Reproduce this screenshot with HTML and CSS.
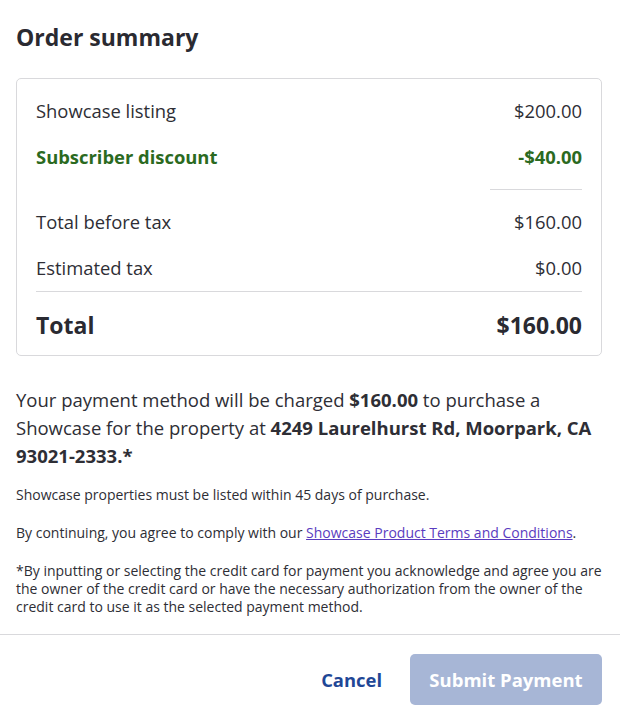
FILE: index.html
```html
<!DOCTYPE html>
<html lang="en">
<head>
<meta charset="utf-8">
<title>Order summary</title>
<link rel="stylesheet" href="styles.css">
</head>
<body>
<div class="content">
  <h1 class="title">Order summary</h1>
  <div class="summary">
    <div class="row"><span>Showcase listing</span><span>$200.00</span></div>
    <div class="row row-gap discount"><span>Subscriber discount</span><span>-$40.00</span></div>
    <div class="divider-short"></div>
    <div class="row"><span>Total before tax</span><span>$160.00</span></div>
    <div class="row row-gap"><span>Estimated tax</span><span>$0.00</span></div>
    <div class="divider-full"></div>
    <div class="row total"><span>Total</span><span>$160.00</span></div>
  </div>
  <p class="lead">Your payment method will be charged <strong>$160.00</strong> to purchase a Showcase for the property at <strong>4249 Laurelhurst Rd, Moorpark, CA 93021-2333.*</strong></p>
  <p class="small first">Showcase properties must be listed within 45 days of purchase.</p>
  <p class="small">By continuing, you agree to comply with our <a href="#" class="link">Showcase Product Terms and Conditions</a>.</p>
  <p class="small">*By inputting or selecting the credit card for payment you acknowledge and agree you are the owner of the credit card or have the necessary authorization from the owner of the credit card to use it as the selected payment method.</p>
</div>
<div class="footer">
  <button class="btn-cancel" type="button">Cancel</button>
  <button class="btn-submit" type="button" disabled>Submit Payment</button>
</div>
</body>
</html>
```

FILE: styles.css
```css
* { box-sizing: border-box; }
html, body {
  margin: 0;
  padding: 0;
  background: #ffffff;
}
body {
  font-family: "Open Sans", "Noto Sans", sans-serif;
  color: #2e2e35;
  width: 620px;
}
.content {
  padding: 0 18px 0 16px;
}
.title {
  margin: 20px 0 24px;
  font-size: 23px;
  line-height: 34px;
  font-weight: 700;
  color: #2a2a31;
}
.summary {
  border: 1px solid #d9d9dc;
  border-radius: 5px;
  padding: 19px 19px 15px;
  display: flex;
  flex-direction: column;
}
.row {
  display: flex;
  justify-content: space-between;
  align-items: center;
  font-size: 18.4px;
  line-height: 26px;
}
.row-gap { margin-top: 20px; }
.discount {
  color: #2b6a1f;
  font-weight: 700;
}
.divider-short {
  align-self: flex-end;
  width: 92px;
  height: 1px;
  background: #d9d9dc;
  margin: 19px 0 19px;
}
.divider-full {
  height: 1px;
  background: #d9d9dc;
  margin: 10px 0 18px;
}
.total {
  font-size: 23px;
  line-height: 30px;
  font-weight: 700;
  color: #2a2a31;
}
.lead {
  margin: 30px 0 0;
  font-size: 18.5px;
  line-height: 28px;
}
.lead strong { font-weight: 700; }
.small {
  margin: 20px 0 0;
  font-size: 14px;
  line-height: 18px;
}
.small.first { margin-top: 16px; }
.link {
  color: #5a3cc0;
  text-decoration: underline;
}
.footer {
  margin-top: 18px;
  border-top: 1px solid #d9d9dc;
  padding: 19px 18px 0 16px;
  display: flex;
  justify-content: flex-end;
  align-items: center;
  gap: 12px;
}
.btn-cancel {
  font-family: inherit;
  background: none;
  border: none;
  padding: 0 16px;
  height: 51px;
  font-size: 18.4px;
  font-weight: 700;
  color: #1f4796;
  cursor: pointer;
}
.btn-submit {
  font-family: inherit;
  width: 192px;
  height: 51px;
  border: none;
  border-radius: 5px;
  background: #a7b6d6;
  color: #ffffff;
  font-size: 18.5px;
  font-weight: 700;
}
```
